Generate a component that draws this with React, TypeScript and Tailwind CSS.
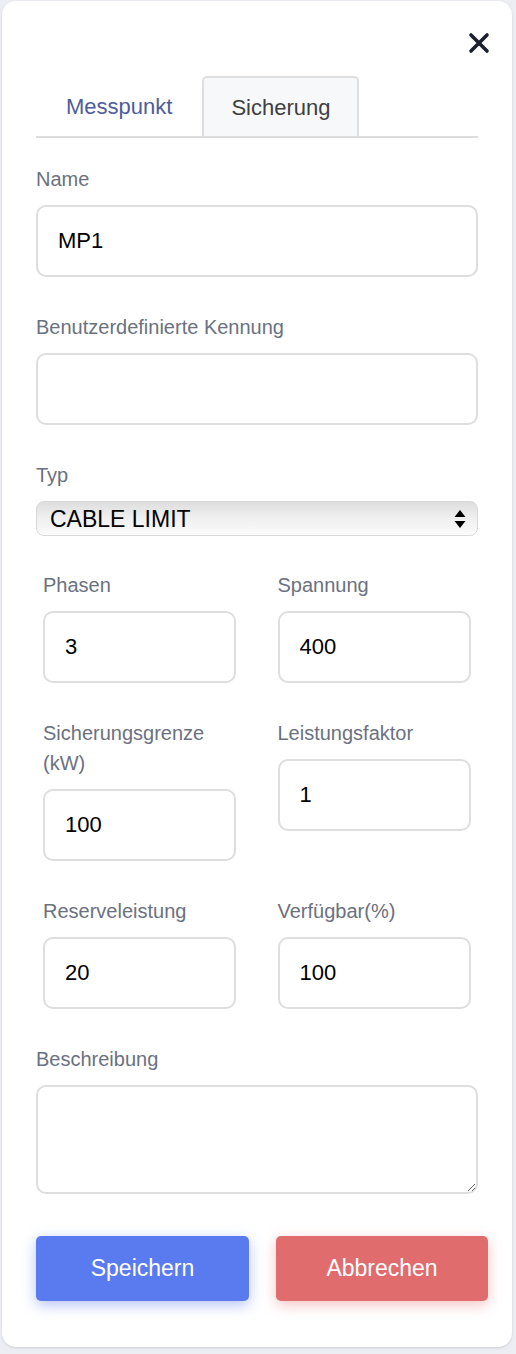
import { useState } from "react";

const font = { fontFamily: '"Liberation Sans", Arial, sans-serif' };

const labelCls = "block text-[20px] leading-[30px] text-[#6b7180] mb-[11px]";
const inputCls =
  "block w-full h-[72px] rounded-[10px] border-2 border-[#dedede] bg-white px-[20px] text-[22px] text-black outline-none";

function Field({ label, value }: { label: string; value: string }) {
  return (
    <div className="mb-[35px]">
      <label className={labelCls}>{label}</label>
      <input className={inputCls} defaultValue={value} />
    </div>
  );
}

export default function App() {
  const [tab, setTab] = useState<"mp" | "fuse">("fuse");
  const grid: Array<[string, string]> = [
    ["Phasen", "3"],
    ["Spannung", "400"],
    ["Sicherungsgrenze (kW)", "100"],
    ["Leistungsfaktor", "1"],
    ["Reserveleistung", "20"],
    ["Verfügbar(%)", "100"],
  ];

  return (
    <div className="min-h-screen bg-[#eceef3] pt-[1px] pl-[2px]" style={font}>
      <div className="h-[1346px] w-[510px] rounded-[14px] bg-white px-[34px] shadow-sm">
        <div className="flex justify-end pt-[31px]">
          <button aria-label="Schließen" className="-mr-[12px] text-[#1b1f2e]">
            <svg width="22" height="22" viewBox="0 0 22 22">
              <path d="M3 3 L19 19 M19 3 L3 19" stroke="currentColor" strokeWidth="3.6" strokeLinecap="round" />
            </svg>
          </button>
        </div>

        <div className="mt-[22px] flex border-b-2 border-[#dcdcdc]">
          <button
            onClick={() => setTab("mp")}
            className={`h-[60px] rounded-t-[5px] px-[30px] text-[22px] ${
              tab === "mp" ? "border-2 border-b-0 border-[#dedede] bg-[#f7f8fa] text-[#404040]" : "text-[#4d5d9c]"
            }`}
          >
            Messpunkt
          </button>
          <button
            onClick={() => setTab("fuse")}
            className={`h-[60px] rounded-t-[5px] px-[27px] text-[22px] ${
              tab === "fuse" ? "border-2 border-b-0 border-[#dedede] bg-[#f7f8fa] text-[#404040]" : "text-[#4d5d9c]"
            }`}
          >
            Sicherung
          </button>
        </div>

        <div className="mt-[26px]">
          <Field label="Name" value="MP1" />
          <Field label="Benutzerdefinierte Kennung" value="" />

          <div className="mb-[34px]">
            <label className={labelCls}>Typ</label>
            <div className="relative">
              <select className="block h-[35px] w-full appearance-none rounded-[8px] border border-[#d8d8d8] bg-gradient-to-b from-[#dedede] via-[#f0f0f0] to-[#fafafa] pl-[13px] text-[23px] text-black shadow-[inset_0_-1px_0_#ffffff] outline-none">
                <option>CABLE LIMIT</option>
              </select>
              <svg className="pointer-events-none absolute right-[12px] top-[9px]" width="12" height="18" viewBox="0 0 12 18">
                <path d="M6 0 L11.5 7 H0.5 Z M6 18 L11.5 11 H0.5 Z" fill="#000" />
              </svg>
            </div>
          </div>

          <div className="grid grid-cols-2 gap-x-[41px] px-[7px]">
            {grid.map(([label, value]) => (
              <div key={label} className="mb-[35px] w-[193px]">
                <label className={labelCls}>{label}</label>
                <input className={inputCls} defaultValue={value} />
              </div>
            ))}
          </div>

          <div className="mb-[42px]">
            <label className={labelCls}>Beschreibung</label>
            <textarea className="block h-[109px] w-full rounded-[10px] border-2 border-[#dedede] bg-white px-[20px] py-[12px] text-[22px] outline-none" />
          </div>

          <div className="flex gap-[27px]">
            <button className="h-[65px] w-[213px] shrink-0 rounded-[5px] bg-[#5a7bef] text-[23px] text-white shadow-[0_4px_14px_rgba(90,123,239,0.45)]">
              Speichern
            </button>
            <button className="h-[65px] w-[212px] shrink-0 rounded-[5px] bg-[#e06c6e] text-[23px] text-white shadow-[0_4px_14px_rgba(224,108,110,0.4)]">
              Abbrechen
            </button>
          </div>
        </div>
      </div>
    </div>
  );
}
